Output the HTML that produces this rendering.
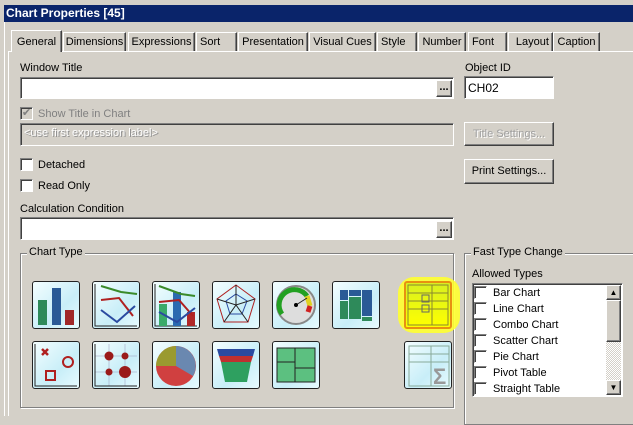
<!DOCTYPE html>
<html><head><style>
body{margin:0;width:633px;height:416px;background:#d4d0c8;font-family:"Liberation Sans",sans-serif;font-size:11px;color:#000;position:relative;overflow:hidden}
.a{position:absolute}
.t{position:absolute;line-height:13px;padding-top:2px}
.tb{left:4px;top:5px;width:629px;height:17px;background:#0a246a;color:#fff;font-weight:bold;font-size:12px;line-height:17px;padding-left:2px;box-sizing:border-box}
.tab{position:absolute;top:32px;height:19px;border:1px solid #fff;border-right:1px solid #404040;border-bottom:none;box-sizing:border-box;text-align:center;line-height:19px;font-size:11px;box-shadow:inset -1px 0 #808080}
.in{position:absolute;background:#fff;border:1px solid;border-color:#808080 #fff #fff #808080;box-shadow:inset 1px 1px #404040;box-sizing:border-box}
.btn{position:absolute;border:1px solid;border-color:#fff #404040 #404040 #fff;box-shadow:inset -1px -1px #808080;box-sizing:border-box;text-align:center;background:#d4d0c8}
.cb{position:absolute;width:13px;height:13px;background:#fff;border:1px solid;border-color:#808080 #fff #fff #808080;box-shadow:inset 1px 1px #404040;box-sizing:border-box}
.grp{position:absolute;border:1px solid #808080;box-shadow:1px 1px #fff,inset 1px 1px #fff}
.lg{position:absolute;background:#d4d0c8;padding:0 2px}
.ic{position:absolute;width:48px;height:48px;border:1px solid #222;border-radius:3px;box-sizing:border-box;background:linear-gradient(135deg,#f4feff,#c8eef8 60%,#e8fbff)}
.li{position:absolute;left:474px;height:16px;line-height:16px}
.li .cb{left:0;top:1px}
.li span{position:absolute;left:19px;white-space:nowrap}
</style></head><body>
<div class="a tb">Chart Properties [45]</div>
<div class="a" style="left:4px;top:22px;width:1px;height:394px;background:#fff"></div>
<div class="a" style="left:8px;top:51px;width:625px;height:1px;background:#fff"></div>
<div class="a" style="left:8px;top:51px;width:1px;height:365px;background:#fff"></div>
<div class="tab" style="left:11px;top:30px;height:22px;width:51px;background:#d4d0c8;z-index:2;line-height:22px">General</div>
<div class="tab" style="left:63px;width:63px">Dimensions</div>
<div class="tab" style="left:128px;width:67px">Expressions</div>
<div class="tab" style="left:196px;width:41px;text-align:left">&nbsp;Sort</div>
<div class="tab" style="left:238px;width:70px">Presentation</div>
<div class="tab" style="left:309px;width:67px">Visual Cues</div>
<div class="tab" style="left:377px;width:40px;text-align:left">&nbsp;Style</div>
<div class="tab" style="left:418px;width:48px">Number</div>
<div class="tab" style="left:468px;width:39px;text-align:left">&nbsp;Font</div>
<div class="tab" style="left:508px;width:45px;text-align:right">Layout&nbsp;</div>
<div class="tab" style="left:553px;width:47px">Caption</div>

<div class="t" style="left:20px;top:60px">Window Title</div>
<div class="in" style="left:20px;top:77px;width:434px;height:22px"></div>
<div class="btn" style="left:436px;top:80px;width:16px;height:17px;line-height:12px;font-weight:bold">...</div>
<div class="t" style="left:465px;top:60px">Object ID</div>
<div class="in" style="left:464px;top:76px;width:90px;height:23px;padding:4px 0 0 3px;font-size:12px">CH02</div>

<div class="cb" style="left:20px;top:107px;background:#d4d0c8;color:#808080;font-size:11px;line-height:11px;text-align:center">✔</div>
<div class="t" style="left:38px;top:106px;color:#808080">Show Title in Chart</div>
<div class="in" style="left:20px;top:123px;width:434px;height:23px;background:#d4d0c8;color:#fff;padding:3px 0 0 3px;text-shadow:1px 1px #909090">&lt;use first expression label&gt;</div>
<div class="btn" style="left:464px;top:122px;width:90px;height:24px;line-height:22px;color:#a0a0a0;text-shadow:1px 1px #fff">Title Settings...</div>
<div class="cb" style="left:20px;top:158px"></div><div class="t" style="left:38px;top:157px">Detached</div>
<div class="cb" style="left:20px;top:179px"></div><div class="t" style="left:38px;top:178px">Read Only</div>
<div class="btn" style="left:464px;top:159px;width:90px;height:25px;line-height:23px">Print Settings...</div>
<div class="t" style="left:20px;top:201px">Calculation Condition</div>
<div class="in" style="left:20px;top:217px;width:434px;height:23px"></div>
<div class="btn" style="left:436px;top:221px;width:16px;height:17px;line-height:12px;font-weight:bold">...</div>

<div class="grp" style="left:20px;top:253px;width:432px;height:153px"></div>
<div class="lg t" style="left:27px;top:246px">Chart Type</div>

<div class="ic" style="left:32px;top:281px"><svg width="46" height="46"><rect x="5" y="18" width="9" height="25" fill="#2e8a5a"/><rect x="19" y="6" width="9" height="37" fill="#2a5a96"/><rect x="32" y="28" width="9" height="15" fill="#a02828"/></svg></div>
<div class="ic" style="left:92px;top:281px"><svg width="46" height="46"><path d="M2 2V44H44" stroke="#222" fill="none"/><path d="M8 4L28 10 44 12" stroke="#3a8a2a" stroke-width="2" fill="none"/><path d="M8 18L26 16 40 34" stroke="#b02020" stroke-width="2" fill="none"/><path d="M8 28L24 40 42 24" stroke="#2a4aa0" stroke-width="2" fill="none"/></svg></div>
<div class="ic" style="left:152px;top:281px"><svg width="46" height="46"><path d="M2 2V44H44" stroke="#222" fill="none"/><rect x="6" y="22" width="8" height="22" fill="#3aaa6a"/><rect x="20" y="10" width="8" height="34" fill="#2a6ab0"/><rect x="34" y="30" width="8" height="14" fill="#b02828"/><path d="M6 4L28 12 42 14" stroke="#3a8a2a" stroke-width="2" fill="none"/><path d="M6 20L26 18 40 34" stroke="#b02020" stroke-width="2" fill="none"/><path d="M6 30L24 40 42 26" stroke="#2a4aa0" stroke-width="2" fill="none"/></svg></div>
<div class="ic" style="left:212px;top:281px"><svg width="46" height="46"><path d="M23 3L42 17 35 40H11L4 17Z" stroke="#b02020" fill="none"/><path d="M23 12L34 19 29 32H17L13 19Z" stroke="#2a4aa0" fill="none"/><path d="M23 3V23M4 17L23 23 42 17M11 40L23 23 35 40" stroke="#222" fill="none"/></svg></div>
<div class="ic" style="left:272px;top:281px"><svg width="46" height="46"><circle cx="23" cy="23" r="19" fill="#ddd" stroke="#888" stroke-width="2"/><path d="M9 32A15 15 0 1 1 34 14" stroke="#22a022" stroke-width="5" fill="none"/><path d="M34 14L37 24" stroke="#e0d020" stroke-width="5"/><path d="M37 24L35 30" stroke="#d02020" stroke-width="5"/><path d="M23 23L34 16" stroke="#222"/><circle cx="23" cy="23" r="2"/></svg></div>
<div class="ic" style="left:332px;top:281px"><svg width="46" height="46"><rect x="7" y="8" width="8" height="10" fill="#2a5a96"/><rect x="16" y="8" width="12" height="6" fill="#2a5a96"/><rect x="29" y="8" width="10" height="26" fill="#2a5a96"/><rect x="7" y="19" width="8" height="18" fill="#2e8a5a"/><rect x="16" y="15" width="12" height="22" fill="#2e8a5a"/><rect x="29" y="35" width="10" height="4" fill="#2e8a5a"/></svg></div>
<div class="a" style="left:398px;top:277px;width:62px;height:56px;border-radius:16px;background:#ffff30;opacity:.9"></div>
<div class="ic" style="left:404px;top:281px;background:linear-gradient(#d8f020,#ffff00);border:2px solid #e89010"><svg width="44" height="44"><path d="M2 2H42V42H2ZM2 10H42M2 18H42M2 26H42M26 2V42" stroke="#888830" fill="none"/><rect x="16" y="12" width="7" height="7" fill="none" stroke="#666"/><rect x="16" y="22" width="7" height="7" fill="none" stroke="#666"/></svg></div>
<div class="ic" style="left:32px;top:341px"><svg width="46" height="46"><path d="M2 2V44H44" stroke="#222" fill="none"/><path d="M9 7L15 13M15 7L9 13" stroke="#b02020" stroke-width="2.5"/><circle cx="35" cy="20" r="5" stroke="#b02020" stroke-width="2" fill="none"/><rect x="13" y="29" width="9" height="9" stroke="#b02020" stroke-width="2" fill="none"/></svg></div>
<div class="ic" style="left:92px;top:341px"><svg width="46" height="46"><path d="M2 14H44M2 30H44M16 2V44M32 2V44" stroke="#99b" stroke-width=".5" fill="none"/><path d="M2 2V44H44" stroke="#222" fill="none"/><circle cx="16" cy="14" r="4.5" fill="#9a1a1a"/><circle cx="32" cy="14" r="3.5" fill="#9a1a1a"/><circle cx="16" cy="30" r="3.5" fill="#9a1a1a"/><circle cx="32" cy="30" r="6" fill="#9a1a1a"/></svg></div>
<div class="ic" style="left:152px;top:341px"><svg width="46" height="46"><circle cx="23" cy="24" r="20" fill="#d04040"/><path d="M23 24V4A20 20 0 0 1 40 34Z" fill="#6a88b0"/><path d="M23 24V4A20 20 0 0 0 3 24Z" fill="#9a9a30"/></svg></div>
<div class="ic" style="left:212px;top:341px"><svg width="46" height="46"><path d="M4 7H42L40 14H6Z" fill="#2a4aa0"/><path d="M6 14H40L38 20H8Z" fill="#c03030"/><path d="M8 20H38L34 40H12Z" fill="#2ea060"/></svg></div>
<div class="ic" style="left:272px;top:341px"><svg width="46" height="46"><rect x="4" y="6" width="38" height="34" fill="#5cc080" stroke="#222"/><path d="M22 6V40M4 20H22M22 26H42" stroke="#222"/></svg></div>
<div class="ic" style="left:404px;top:341px"><svg width="46" height="46"><path d="M4 4H44V44H4ZM4 12H44M4 20H44M26 4V44" stroke="#8a9" fill="none"/><text x="28" y="42" font-size="22" font-weight="bold" fill="#999" font-family="Liberation Sans">Σ</text></svg></div>

<div class="grp" style="left:464px;top:253px;width:175px;height:170px"></div>
<div class="lg t" style="left:471px;top:246px">Fast Type Change</div>
<div class="t" style="left:472px;top:266px">Allowed Types</div>
<div class="in" style="left:472px;top:283px;width:151px;height:114px"></div>
<div class="li" style="top:285px"><div class="cb"></div><span>Bar Chart</span></div>
<div class="li" style="top:301px"><div class="cb"></div><span>Line Chart</span></div>
<div class="li" style="top:317px"><div class="cb"></div><span>Combo Chart</span></div>
<div class="li" style="top:333px"><div class="cb"></div><span>Scatter Chart</span></div>
<div class="li" style="top:349px"><div class="cb"></div><span>Pie Chart</span></div>
<div class="li" style="top:365px"><div class="cb"></div><span>Pivot Table</span></div>
<div class="li" style="top:381px"><div class="cb"></div><span>Straight Table</span></div>
<div class="a" style="left:606px;top:285px;width:15px;height:110px;background:repeating-conic-gradient(#fff 0 25%,#d4d0c8 0 50%) 0 0/2px 2px"></div>
<div class="btn" style="left:606px;top:285px;width:15px;height:15px;font-size:8px;line-height:13px">▲</div>
<div class="btn" style="left:606px;top:300px;width:15px;height:42px"></div>
<div class="btn" style="left:606px;top:380px;width:15px;height:15px;font-size:8px;line-height:13px">▼</div>
</body></html>
